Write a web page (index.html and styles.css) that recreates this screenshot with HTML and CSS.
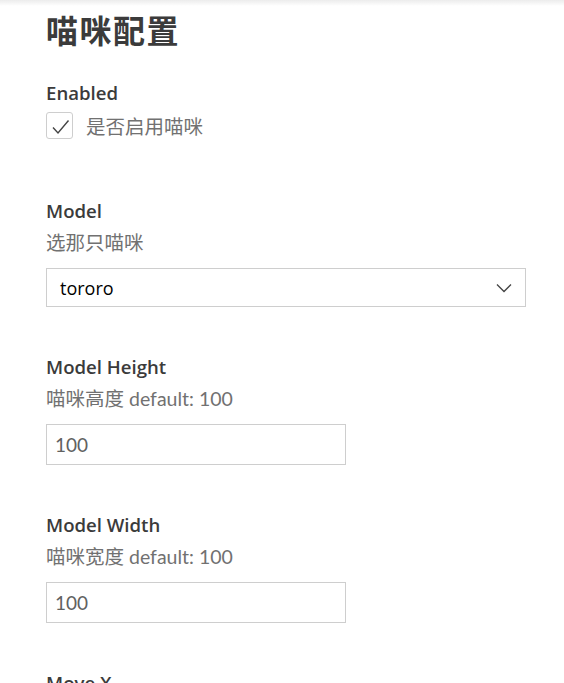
FILE: index.html
```html
<!DOCTYPE html>
<html lang="zh-CN">
<head>
  <meta charset="UTF-8" />
  <meta name="viewport" content="width=device-width, initial-scale=1.0"/>
  <title>喵咪配置</title>
  <link rel="stylesheet" href="styles.css">
</head>
<body>
  <div class="scroll-shadow"></div>

  <div class="settings">
    <h1 class="title">喵咪配置</h1>

    <!-- Enabled -->
    <div class="setting setting-first">
      <div class="label">Enabled</div>
      <label class="check-row">
        <span class="checkbox">
          <svg width="20" height="20" viewBox="0 0 20 20">
            <path d="M3 11.5 L8 17 L18.5 4.5" fill="none" stroke="#444" stroke-width="1.4"/>
          </svg>
        </span>
        <span class="check-text">是否启用喵咪</span>
      </label>
    </div>

    <!-- Model -->
    <div class="setting setting-model">
      <div class="label">Model</div>
      <div class="desc">选那只喵咪</div>
      <div class="select">
        <span class="select-value">tororo</span>
        <svg class="chevron" width="16" height="10" viewBox="0 0 16 10">
          <path d="M1 1.5 L8 8.5 L15 1.5" fill="none" stroke="#444" stroke-width="1.3"/>
        </svg>
      </div>
    </div>

    <!-- Model Height -->
    <div class="setting">
      <div class="label">Model Height</div>
      <div class="desc">喵咪高度 default: 100</div>
      <div class="input">100</div>
    </div>

    <!-- Model Width -->
    <div class="setting">
      <div class="label">Model Width</div>
      <div class="desc">喵咪宽度 default: 100</div>
      <div class="input">100</div>
    </div>

    <!-- Move X -->
    <div class="setting">
      <div class="label">Move X</div>
      <div class="desc">喵咪横向偏移 default: 0</div>
      <div class="input">0</div>
    </div>
  </div>
</body>
</html>
```

FILE: styles.css
```css
* { margin: 0; padding: 0; box-sizing: border-box; }
html, body {
  width: 100%;
  height: 100%;
  overflow: hidden;
  background: #fff;
  font-family: 'Open Sans', 'Noto Sans CJK SC', sans-serif;
  color: #3b3b3b;
}

.scroll-shadow {
  position: fixed;
  top: 0;
  left: 0;
  width: 100%;
  height: 6px;
  background: linear-gradient(#ececec, rgba(255,255,255,0));
  z-index: 5;
}

.settings {
  padding: 9px 0 0 46px;
}

.title {
  font-family: 'Noto Sans CJK SC', sans-serif;
  font-size: 32px;
  font-weight: 700;
  line-height: 40px;
  color: #3b3b3b;
  letter-spacing: 1.5px;
}

.setting { margin-top: 48px; }
.setting-first { margin-top: 32px; }
.setting-model { margin-top: 60px; }

.label {
  font-size: 18.6px;
  font-weight: 600;
  line-height: 24px;
  color: #3b3b3b;
}

.desc {
  margin-top: 7px;
  font-family: 'Lato', 'Noto Sans CJK SC', sans-serif;
  font-size: 19.5px;
  line-height: 26px;
  color: #717171;
}

.check-row {
  display: flex;
  align-items: center;
  margin-top: 7px;
  gap: 13px;
}

.checkbox {
  width: 27px;
  height: 27px;
  border: 1px solid #cecece;
  border-radius: 3px;
  display: flex;
  align-items: center;
  justify-content: center;
}

.check-text {
  font-family: 'Noto Sans CJK SC', sans-serif;
  font-size: 19.5px;
  line-height: 26px;
  color: #717171;
}

.select {
  margin-top: 12px;
  width: 480px;
  height: 39px;
  border: 1px solid #cecece;
  display: flex;
  align-items: center;
  justify-content: space-between;
  padding: 0 13px 0 13px;
}

.select-value {
  font-size: 18px;
  color: #000;
}

.input {
  margin-top: 12px;
  width: 300px;
  height: 41px;
  border: 1px solid #cecece;
  display: flex;
  align-items: center;
  padding-left: 8px;
  font-family: 'Lato', sans-serif;
  font-size: 19px;
  color: #616161;
}
```
